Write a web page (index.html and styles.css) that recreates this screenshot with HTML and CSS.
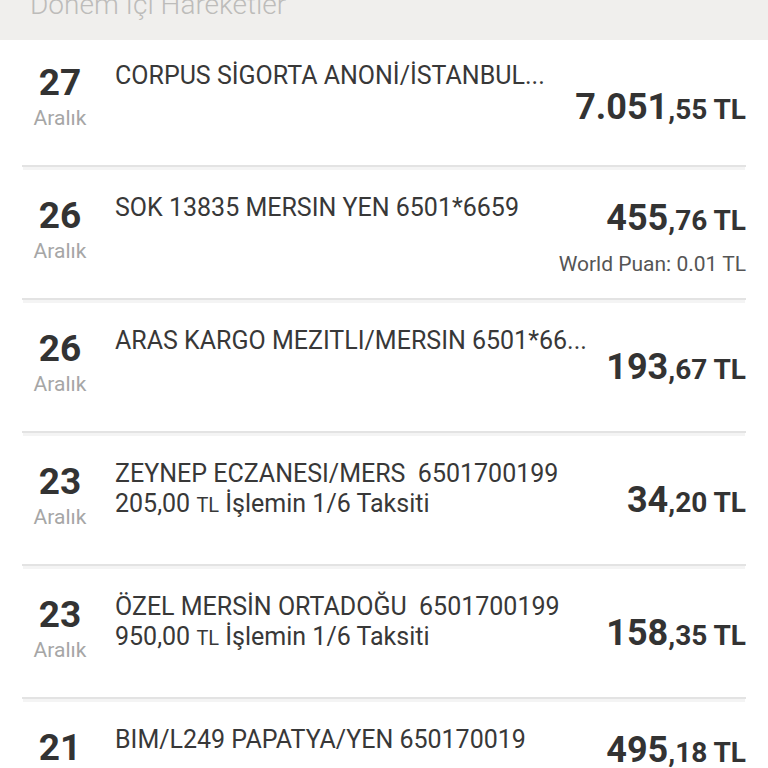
FILE: index.html
```html
<!DOCTYPE html>
<html lang="tr">
<head>
<meta charset="utf-8">
<link rel="stylesheet" href="styles.css">
</head>
<body>
<div class="header"><div class="header-text">Dönem İçi Hareketler</div></div>
<ul class="list">
  <li class="row">
    <div class="date"><div class="day">27</div><div class="month">Aralık</div></div>
    <div class="body"><div class="title">CORPUS SİGORTA ANONİ/İSTANBUL...</div></div>
    <div class="amount"><div class="sum"><span class="int">7.051</span><span class="dec">,55 TL</span></div></div>
  </li>
  <li class="row">
    <div class="date"><div class="day">26</div><div class="month">Aralık</div></div>
    <div class="body"><div class="title">SOK 13835 MERSIN YEN 6501*6659</div></div>
    <div class="amount"><div class="sum"><span class="int">455</span><span class="dec">,76 TL</span></div><div class="puan">World Puan: 0.01 TL</div></div>
  </li>
  <li class="row">
    <div class="date"><div class="day">26</div><div class="month">Aralık</div></div>
    <div class="body"><div class="title">ARAS KARGO MEZITLI/MERSIN 6501*66...</div></div>
    <div class="amount"><div class="sum"><span class="int">193</span><span class="dec">,67 TL</span></div></div>
  </li>
  <li class="row">
    <div class="date"><div class="day">23</div><div class="month">Aralık</div></div>
    <div class="body"><div class="title">ZEYNEP ECZANESI/MERS&nbsp; 6501700199</div><div class="sub">205,00 <span class="tl">TL</span> İşlemin 1/6 Taksiti</div></div>
    <div class="amount"><div class="sum"><span class="int">34</span><span class="dec">,20 TL</span></div></div>
  </li>
  <li class="row">
    <div class="date"><div class="day">23</div><div class="month">Aralık</div></div>
    <div class="body"><div class="title">ÖZEL MERSİN ORTADOĞU&nbsp; 6501700199</div><div class="sub">950,00 <span class="tl">TL</span> İşlemin 1/6 Taksiti</div></div>
    <div class="amount"><div class="sum"><span class="int">158</span><span class="dec">,35 TL</span></div></div>
  </li>
  <li class="row">
    <div class="date"><div class="day">21</div><div class="month">Aralık</div></div>
    <div class="body"><div class="title">BIM/L249 PAPATYA/YEN 650170019</div></div>
    <div class="amount"><div class="sum"><span class="int">495</span><span class="dec">,18 TL</span></div><div class="puan">World Puan: 0.01 TL</div></div>
  </li>
</ul>
</body>
</html>
```
FILE: styles.css
```css
html, body {
  margin: 0;
  padding: 0;
  background: #ffffff;
  font-family: Roboto, "Noto Sans", sans-serif;
  width: 768px;
  height: 768px;
  overflow: hidden;
}

.header {
  height: 40px;
  background: #f0efed;
  overflow: hidden;
  padding-left: 30px;
}

.header-text {
  margin-top: -10px;
  font-size: 28px;
  line-height: 30px;
  font-weight: 300;
  color: #bdbcba;
}

.list {
  list-style: none;
  margin: 0;
  padding: 0 22px;
}

.row {
  display: flex;
  height: 133px;
  box-sizing: border-box;
  border-bottom: 2px solid #e3e3e3;
  box-shadow: 0 4px 0 -1px #f4f4f4;
}

.row:first-child {
  height: 127px;
}

.row:first-child .date,
.row:first-child .body {
  padding-top: 21px;
}

.row:first-child .amount {
  padding-top: 16px;
}

.date {
  width: 76px;
  padding-top: 27px;
  text-align: center;
  flex-shrink: 0;
}

.day {
  font-size: 37px;
  line-height: 44px;
  font-weight: 700;
  color: #333333;
}

.month {
  font-size: 21px;
  line-height: 26px;
  color: #a6a6a6;
}

.body {
  flex: 1;
  min-width: 0;
  margin-left: 17px;
  padding-top: 26px;
  color: #383838;
  font-size: 25px;
  line-height: 30px;
  white-space: nowrap;
}

.sub .tl {
  font-size: 20px;
}

.amount {
  align-self: center;
  padding-top: 10px;
  text-align: right;
  flex-shrink: 0;
  color: #333333;
}

.sum {
  line-height: 40px;
  font-weight: 700;
  white-space: nowrap;
}

.int {
  font-size: 36px;
}

.dec {
  font-size: 28px;
}

.puan {
  margin-top: 5px;
  font-size: 21px;
  line-height: 28px;
  color: #555555;
  white-space: nowrap;
}
```
